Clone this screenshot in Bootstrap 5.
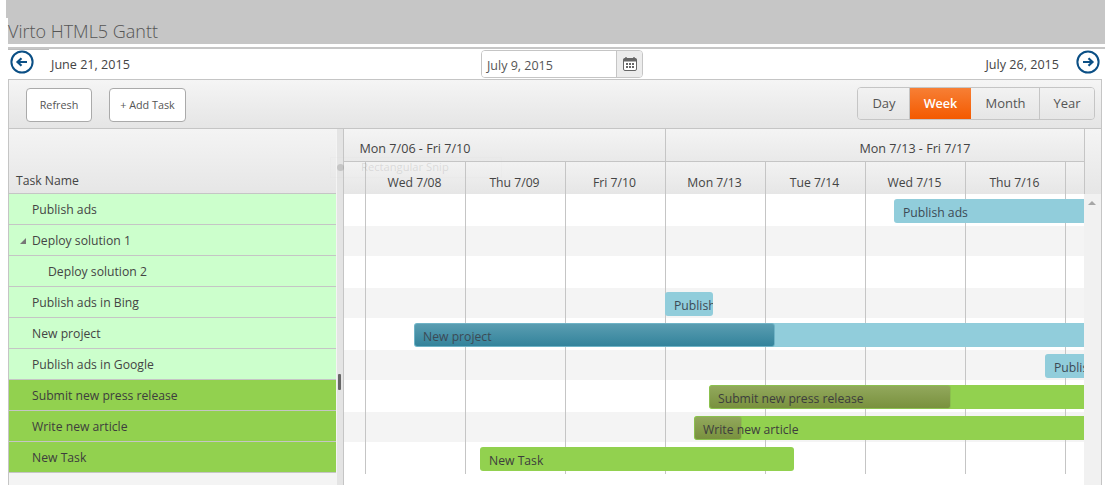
<!DOCTYPE html>
<html lang="en">
<head>
<meta charset="utf-8">
<title>Virto HTML5 Gantt</title>
<link rel="stylesheet" href="https://cdn.jsdelivr.net/npm/bootstrap@5.3.0/dist/css/bootstrap.min.css">
<style>
html,body{height:485px;overflow:hidden}
body{background:#fff;font-family:"Open Sans","Liberation Sans",sans-serif;font-size:12.2px;color:#444;position:relative}
.top-cap{position:absolute;left:6px;top:0;width:1096px;height:18px;background:#c6c6c6}
.title-band{position:relative;margin-left:8px;height:44px;background:#c6c6c6;color:#555;font-size:18px;font-weight:300;line-height:20px;padding-top:21px}
.rule-band{margin:3px 0 0 8px;height:2px;background:#c6c6c6}
.rule-stub{margin-left:8px;width:41px;height:1px;background:#bdbdbd}
.date-row{height:29px;margin-left:10px;width:1090px}
.nav-circle{width:24px;height:24px;display:block;flex:none}
.date-lbl{font-size:12.6px;color:#444;line-height:16px;margin-top:7px}
.date-left{margin-left:17px}
.date-right{margin-right:17px}
.date-box{width:162px;height:28px;margin-top:0;border:1px solid #c5c5c5;border-radius:4px;overflow:hidden;position:absolute;left:471px;top:0}
.date-val{flex:1;line-height:29px;padding-left:5px;font-size:12.5px;color:#555;background:#fff}
.date-ico{width:26px;border-left:1px solid #c5c5c5;background:#ececec}
.frame{margin-left:8px;width:1094px;height:406px;border:1px solid #c5c5c5;border-bottom:0;background:#f4f4f4;position:relative}
.tool-bar{height:49px;background:linear-gradient(#f5f5f5,#e5e5e5);border-bottom:1px solid #c5c5c5;padding:8px 6px 0 17px}
.tool-btn{height:34px;background:#fff;border:1px solid #aaa;border-radius:4px;color:#555;padding:0;--bs-btn-font-size:10.8px}
.tool-refresh{width:66px;margin-right:17px}
.tool-add{width:77px}
.view-group{width:238px;height:33px;flex:none;border:1px solid #c5c5c5;border-radius:4px;overflow:hidden;margin-top:-1px}
.btn-group.view-group>.view-btn.view-btn:not(:first-child){margin-left:0}
.view-group>.view-btn{flex:none;border:0;background:linear-gradient(#f2f2f2,#e6e6e6);color:#555;padding:0;border-radius:0;line-height:31px;--bs-btn-font-size:13px}
.view-group>.view-divided{box-shadow:inset -1px 0 0 #c5c5c5}
.view-group>.view-on{background:linear-gradient(#f77f35,#f45a00);color:#fff;font-weight:600;--bs-btn-font-size:12.6px}
.pane-row{height:357px}
.left-pane{width:327px;flex:none}
.left-head{height:65px;margin-right:-1px;position:relative;background:linear-gradient(#f4f4f4,#e6e6e6);border-bottom:1px solid #c5c5c5;padding:0 7px 3px}
.task-row{height:31px;line-height:32px;background:#ccffcc;border-bottom:1px solid #c5c5c5;padding-left:23px;color:#444;white-space:nowrap}
.task-child{padding-left:39px}
.task-done{background:#92d14f;color:#3d3d3d}
.tree-arrow{position:absolute;left:11px;margin-top:13px;width:0;height:0;border-left:6px solid transparent;border-bottom:6px solid #777}
.split-bar{width:8px;flex:none;background:#e4e4e4;border-left:1px solid #f4f4f4;border-right:1px solid #c5c5c5;position:relative}
.split-grip{position:absolute;left:1px;top:245px;width:3px;height:16px;border-radius:1px;background:#666}
.right-pane{flex:1;min-width:0;position:relative;background:#fff}
.right-head{height:65px;display:flex}
.scale-wrap{width:740px;flex:none;overflow:hidden}
.scale-top{height:33px;display:flex;border-bottom:1px solid #c5c5c5;background:linear-gradient(#f4f4f4,#e9e9e9)}
.scale-week{text-align:center;line-height:39px;font-size:12.6px;border-right:1px solid #c5c5c5;white-space:nowrap;flex:none}
.scale-week-a{width:501px;margin-left:-179px}
.scale-week-b{width:498px;border-right:0}
.scale-bottom{height:33px;display:flex;border-bottom:1px solid #c5c5c5;background:linear-gradient(#f2f2f2,#e6e6e6)}
.scale-day{width:100px;flex:none;text-align:center;line-height:41px;padding-right:2px;border-right:1px solid #c5c5c5;white-space:nowrap}
.scale-first{width:22px}
.scale-last{border-right:0}
.scale-gutter{flex:1;background:linear-gradient(#f4f4f4,#e6e6e6);border-left:1px solid #c5c5c5}
.plot{position:absolute;left:0;top:65px;width:740px;height:292px;overflow:hidden;background:#fff}
.band{height:30px;background:#f4f4f4;margin-top:32px}
.grid-line{position:absolute;top:0;width:1px;height:280px;background:#c5c5c5}
.bar-item{position:absolute;height:24px;border-radius:3px;line-height:28px;padding-left:9px;white-space:nowrap;overflow:hidden;color:#3c4a55}
.bar-blue{background:#91cddb}
.bar-green{background:#92d14f;color:#3d3d3d}
.bar-fill{position:absolute;left:0;top:0;height:24px;border-radius:3px;border:1px solid transparent}
.fill-blue{background:linear-gradient(#5a9db1,#33839b);border-color:#6fb3c6}
.fill-green{background:linear-gradient(#92a85c,#79913e);border-color:#8bc04e}
.bar-text{position:relative}
.v-scroll{position:absolute;left:740px;top:65px;width:17px;height:292px;background:#f1f1f1}
.v-up{position:absolute;left:4px;top:7px;width:0;height:0;border-left:4px solid transparent;border-right:4px solid transparent;border-bottom:4px solid #a6a6a6}
.ghost-tip{position:absolute;left:-14px;top:28px;width:172px;height:21px;border:1px solid rgba(190,190,190,.05);color:rgba(120,120,120,.2);font-size:11.2px;line-height:18px;padding-left:30px;white-space:nowrap}
.ghost-dot{position:absolute;left:6px;top:6px;width:7px;height:7px;border-radius:50%;background:rgba(120,120,120,.28)}
</style>
</head>
<body>
<div class="top-cap"></div>
<div class="title-band">Virto HTML5 Gantt</div>
<div class="rule-band"></div>
<div class="rule-stub"></div>
<div class="date-row d-flex align-items-start position-relative">
  <svg class="nav-circle" viewBox="0 0 24 24"><circle cx="12" cy="12" r="10.6" fill="#fff" stroke="#0b4f85" stroke-width="2"/><path d="M17 12H8M11.5 8.2 7.5 12l4 3.8" fill="none" stroke="#0b4f85" stroke-width="2.2"/></svg>
  <span class="date-lbl date-left">June 21, 2015</span>
  <div class="date-box d-flex">
    <span class="date-val">July 9, 2015</span>
    <span class="date-ico d-flex align-items-center justify-content-center">
      <svg width="14" height="14" viewBox="0 0 14 14"><rect x=".5" y="1.5" width="13" height="12" rx="1.5" fill="#fff" stroke="#666"/><rect x=".5" y="1.5" width="13" height="3" fill="#666"/><path d="M3 0v3M11 0v3" stroke="#666" stroke-width="1.4"/><path d="M3 6h2v2H3zM6 6h2v2H6zM9 6h2v2H9zM3 9h2v2H3zM6 9h2v2H6zM9 9h2v2H9z" fill="#666"/></svg>
    </span>
  </div>
  <span class="date-lbl date-right ms-auto">July 26, 2015</span>
  <svg class="nav-circle" viewBox="0 0 24 24"><circle cx="12" cy="12" r="10.6" fill="#fff" stroke="#0b4f85" stroke-width="2"/><path d="M7 12h9M12.5 8.2l4 3.8-4 3.8" fill="none" stroke="#0b4f85" stroke-width="2.2"/></svg>
</div>
<div class="frame">
  <div class="tool-bar d-flex align-items-start">
    <button class="btn tool-btn tool-refresh" type="button">Refresh</button>
    <button class="btn tool-btn tool-add" type="button">+ Add Task</button>
    <div class="btn-group view-group ms-auto" role="group">
      <button class="btn view-btn view-divided" style="width:52px" type="button">Day</button>
      <button class="btn view-btn view-on" style="width:61px" type="button">Week</button>
      <button class="btn view-btn view-divided" style="width:69px" type="button">Month</button>
      <button class="btn view-btn" style="width:54px" type="button">Year</button>
    </div>
  </div>
  <div class="pane-row d-flex">
    <div class="left-pane">
      <div class="left-head d-flex align-items-end">Task Name</div>
      <div class="task-row">Publish ads</div>
      <div class="task-row"><span class="tree-arrow"></span>Deploy solution 1</div>
      <div class="task-row task-child">Deploy solution 2</div>
      <div class="task-row">Publish ads in Bing</div>
      <div class="task-row">New project</div>
      <div class="task-row">Publish ads in Google</div>
      <div class="task-row task-done">Submit new press release</div>
      <div class="task-row task-done">Write new article</div>
      <div class="task-row task-done">New Task</div>
    </div>
    <div class="split-bar"><span class="split-grip"></span></div>
    <div class="right-pane">
      <div class="right-head">
        <div class="scale-wrap">
          <div class="scale-top">
            <div class="scale-week scale-week-a">Mon 7/06 - Fri 7/10</div>
            <div class="scale-week scale-week-b">Mon 7/13 - Fri 7/17</div>
          </div>
          <div class="scale-bottom">
            <div class="scale-day scale-first"></div>
            <div class="scale-day">Wed 7/08</div>
            <div class="scale-day">Thu 7/09</div>
            <div class="scale-day">Fri 7/10</div>
            <div class="scale-day">Mon 7/13</div>
            <div class="scale-day">Tue 7/14</div>
            <div class="scale-day">Wed 7/15</div>
            <div class="scale-day">Thu 7/16</div>
            <div class="scale-day scale-last"></div>
          </div>
        </div>
        <div class="scale-gutter"></div>
      </div>
      <div class="plot">
        <div class="band"></div><div class="band"></div><div class="band"></div><div class="band"></div>
        <span class="grid-line" style="left:21px"></span><span class="grid-line" style="left:121px"></span>
        <span class="grid-line" style="left:221px"></span><span class="grid-line" style="left:321px"></span>
        <span class="grid-line" style="left:421px"></span><span class="grid-line" style="left:521px"></span>
        <span class="grid-line" style="left:621px"></span><span class="grid-line" style="left:721px"></span>
        <div class="bar-item bar-blue" style="left:550px;top:5px;width:200px">Publish ads</div>
        <div class="bar-item bar-blue" style="left:321px;top:98px;width:48px">Publish ads in Bing</div>
        <div class="bar-item bar-blue" style="left:70px;top:129px;width:680px"><span class="bar-fill fill-blue" style="width:361px"></span><span class="bar-text">New project</span></div>
        <div class="bar-item bar-blue" style="left:701px;top:160px;width:60px">Publish ads in Google</div>
        <div class="bar-item bar-green" style="left:365px;top:191px;width:385px"><span class="bar-fill fill-green" style="width:242px"></span><span class="bar-text">Submit new press release</span></div>
        <div class="bar-item bar-green" style="left:350px;top:222px;width:400px"><span class="bar-fill fill-green" style="width:48px"></span><span class="bar-text">Write new article</span></div>
        <div class="bar-item bar-green" style="left:136px;top:253px;width:314px">New Task</div>
      </div>
      <div class="v-scroll"><span class="v-up"></span></div>
      <div class="ghost-tip"><span class="ghost-dot"></span>Rectangular Snip</div>
    </div>
  </div>
</div>
</body>
</html>
